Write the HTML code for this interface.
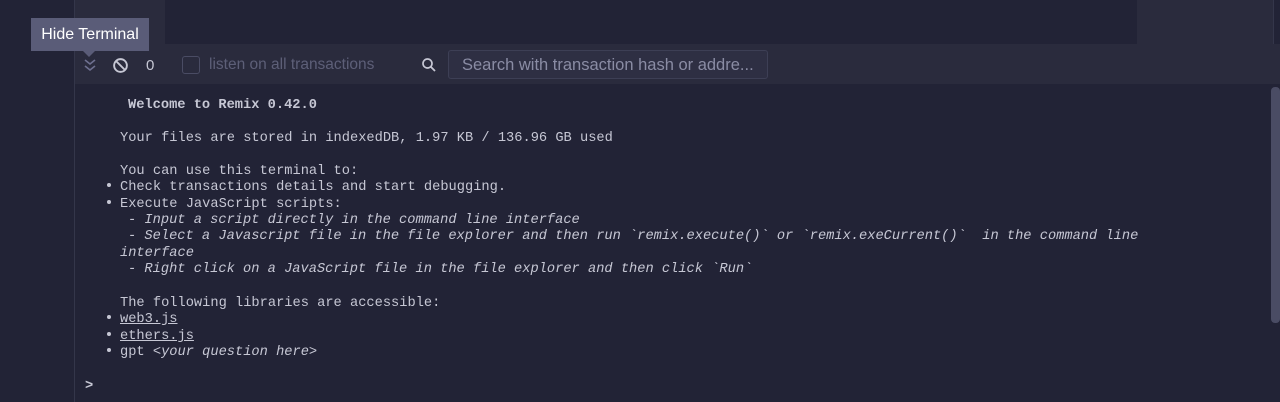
<!DOCTYPE html>
<html><head><meta charset="utf-8"><style>
body{margin:0;width:1280px;height:402px;background:#222336;position:relative;overflow:hidden;font-family:"Liberation Sans",sans-serif}
.a{position:absolute}
.m{position:absolute;font-family:"Liberation Mono",monospace;font-size:13.7px;color:#c6c7d4;white-space:pre;line-height:16px}
i{font-style:italic}
u{text-decoration:underline}
.b{position:absolute;left:107px;width:4px;height:4px;border-radius:2px;background:#c6c7d4}
</style></head><body>
<div class="a" style="left:74px;top:0;width:1px;height:402px;background:#34364a"></div>
<div class="a" style="left:75px;top:0;width:90px;height:44px;background:#2a2b3d"></div>
<div class="a" style="left:1137px;top:0;width:136px;height:44px;background:#2a2b3d"></div>
<div class="a" style="left:1273px;top:0;width:1px;height:44px;background:#34364a"></div>
<div class="a" style="left:75px;top:44px;width:1205px;height:40px;background:#2a2b3d"></div>
<div class="a" style="left:31px;top:18px;width:118px;height:33px;background:#5a5c78;color:#fff;font-size:16px;line-height:33px;text-align:center">Hide Terminal</div>
<div class="a" style="left:83px;top:51px;width:0;height:0;border-left:6px solid transparent;border-right:6px solid transparent;border-top:6px solid #5a5c78"></div>
<svg class="a" style="left:83px;top:57px" width="14" height="16" viewBox="0 0 14 16"><path d="M2 3l5 4 5-4M2 9l5 4 5-4" fill="none" stroke="#6e7090" stroke-width="1.6"/></svg>
<svg class="a" style="left:112px;top:57px" width="17" height="17" viewBox="0 0 16 16"><circle cx="8" cy="8" r="6" fill="none" stroke="#c6c7d4" stroke-width="1.8"/><path d="M4 4l8 8" stroke="#c6c7d4" stroke-width="1.8"/></svg>
<div class="a" style="left:146px;top:57px;color:#c6c7d4;font-size:15px">0</div>
<div class="a" style="left:182px;top:56px;width:16px;height:16px;border:1px solid #4a4c64;border-radius:3px"></div>
<div class="a" style="left:209px;top:56px;color:#5d5f78;font-size:15.5px">listen on all transactions</div>
<svg class="a" style="left:421px;top:57px" width="16" height="16" viewBox="0 0 16 16"><circle cx="6.5" cy="6.5" r="4.5" fill="none" stroke="#c6c7d4" stroke-width="1.7"/><path d="M10 10l4 4" stroke="#c6c7d4" stroke-width="1.8"/></svg>
<div class="a" style="left:448px;top:50px;border:1px solid #3d3f55;border-radius:3px;background:#2e2f43;color:#8a8ca4;font-size:16.5px;line-height:29px;padding-left:13px;box-sizing:border-box;width:320px;height:29px">Search with transaction hash or addre...</div>
<div class="a" style="left:1271px;top:87px;width:9px;height:236px;background:#4a4c64;border-radius:4px"></div>
<div class="m" style="left:128px;top:98px;font-weight:bold">Welcome to Remix 0.42.0</div>
<div class="m" style="left:120px;top:131px">Your files are stored in indexedDB, 1.97 KB / 136.96 GB used</div>
<div class="m" style="left:120px;top:164px">You can use this terminal to:</div>
<div class="b" style="top:183px"></div>
<div class="m" style="left:120px;top:180px">Check transactions details and start debugging.</div>
<div class="b" style="top:200px"></div>
<div class="m" style="left:120px;top:197px">Execute JavaScript scripts:</div>
<div class="m" style="left:128px;top:213px"><i>- Input a script directly in the command line interface</i></div>
<div class="m" style="left:128px;top:229px"><i>- Select a Javascript file in the file explorer and then run `remix.execute()` or `remix.exeCurrent()`  in the command line</i></div>
<div class="m" style="left:120px;top:246px"><i>interface</i></div>
<div class="m" style="left:128px;top:262px"><i>- Right click on a JavaScript file in the file explorer and then click `Run`</i></div>
<div class="m" style="left:120px;top:296px">The following libraries are accessible:</div>
<div class="b" style="top:315px"></div>
<div class="m" style="left:120px;top:312px"><u>web3.js</u></div>
<div class="b" style="top:332px"></div>
<div class="m" style="left:120px;top:329px"><u>ethers.js</u></div>
<div class="b" style="top:348px"></div>
<div class="m" style="left:120px;top:345px">gpt <i>&lt;your question here&gt;</i></div>
<div class="m" style="left:85px;top:379px;font-weight:bold">&gt;</div>
</body></html>
